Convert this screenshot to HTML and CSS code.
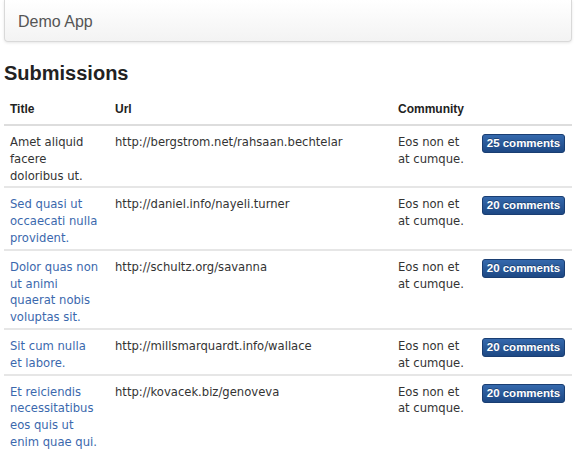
FILE: index.html
```html
<!DOCTYPE html>
<html>
<head>
<meta charset="utf-8">
<link rel="stylesheet" href="styles.css">
</head>
<body>
<div class="page">
  <div class="navbar"><span class="brand">Demo App</span></div>
  <h2 class="heading">Submissions</h2>
  <table class="subs">
    <thead>
      <tr>
        <th class="c-title">Title</th>
        <th class="c-url">Url</th>
        <th class="c-comm">Community</th>
        <th class="c-btn"></th>
      </tr>
    </thead>
    <tbody>
      <tr>
        <td class="c-title"><span class="plain">Amet aliquid facere doloribus ut.</span></td>
        <td class="c-url">http://bergstrom.net/rahsaan.bechtelar</td>
        <td class="c-comm">Eos non et at cumque.</td>
        <td class="c-btn"><a class="btn">25 comments</a></td>
      </tr>
      <tr>
        <td class="c-title"><a class="link">Sed quasi ut occaecati nulla provident.</a></td>
        <td class="c-url">http://daniel.info/nayeli.turner</td>
        <td class="c-comm">Eos non et at cumque.</td>
        <td class="c-btn"><a class="btn">20 comments</a></td>
      </tr>
      <tr>
        <td class="c-title"><a class="link">Dolor quas non ut animi quaerat nobis voluptas sit.</a></td>
        <td class="c-url">http://schultz.org/savanna</td>
        <td class="c-comm">Eos non et at cumque.</td>
        <td class="c-btn"><a class="btn">20 comments</a></td>
      </tr>
      <tr>
        <td class="c-title"><a class="link">Sit cum nulla et labore.</a></td>
        <td class="c-url">http://millsmarquardt.info/wallace</td>
        <td class="c-comm">Eos non et at cumque.</td>
        <td class="c-btn"><a class="btn">20 comments</a></td>
      </tr>
      <tr>
        <td class="c-title"><a class="link">Et reiciendis necessitatibus eos quis ut enim quae qui.</a></td>
        <td class="c-url">http://kovacek.biz/genoveva</td>
        <td class="c-comm">Eos non et at cumque.</td>
        <td class="c-btn"><a class="btn">20 comments</a></td>
      </tr>
    </tbody>
  </table>
</div>
</body>
</html>
```

FILE: styles.css
```css
html, body {
  margin: 0;
  padding: 0;
  background: #ffffff;
}
.page {
  padding: 0 4px;
  font-family: "DejaVu Sans", Verdana, sans-serif;
  color: #333333;
}
.navbar {
  height: 42px;
  box-sizing: border-box;
  background: linear-gradient(#ffffff, #f3f3f3);
  border: 1px solid #d9d9d9;
  border-top: none;
  border-radius: 0 0 4px 4px;
  box-shadow: 0 1px 3px rgba(0,0,0,0.10);
  display: flex;
  align-items: center;
  padding-left: 13px;
  padding-top: 3px;
}
.brand {
  font-family: "Liberation Sans", Arial, sans-serif;
  font-size: 16px;
  color: #555555;
}
.heading {
  font-family: "Liberation Sans", Arial, sans-serif;
  font-size: 20px;
  font-weight: bold;
  line-height: 24px;
  color: #222222;
  margin: 19px 0 10px 0;
}
.subs {
  width: 568px;
  border-collapse: collapse;
  table-layout: fixed;
}
.subs th {
  font-family: "Liberation Sans", Arial, sans-serif;
  font-size: 12px;
  font-weight: bold;
  line-height: 17px;
  text-align: left;
  color: #222222;
  padding: 6px 6px 6px 6px;
  border-bottom: 2px solid #dddddd;
}
.subs td {
  font-size: 11.6px;
  line-height: 16.8px;
  vertical-align: top;
  padding: 8px 6px 2px 6px;
  border-top: 2px solid #e6e6e6;
}
.subs tbody tr:first-child td {
  border-top: none;
}
.subs .c-title { width: 89px; padding-right: 10px; }
.subs .c-url { width: 271px; }
.subs .c-comm { width: 72px; }
.subs .c-btn { width: 84px; padding-right: 6px; }
.link {
  color: #3b68ad;
  text-decoration: none;
}
.plain {
  color: #333333;
}
.btn {
  display: inline-block;
  box-sizing: border-box;
  width: 83px;
  height: 19px;
  margin-top: 0;
  text-align: center;
  font-family: "Liberation Sans", Arial, sans-serif;
  font-size: 11.5px;
  font-weight: bold;
  line-height: 17px;
  color: #ffffff;
  text-shadow: 0 -1px 0 rgba(0,0,0,0.3);
  background: linear-gradient(#3569ad, #1d4884);
  border: 1px solid #1a3e72;
  border-radius: 3px;
}
```
